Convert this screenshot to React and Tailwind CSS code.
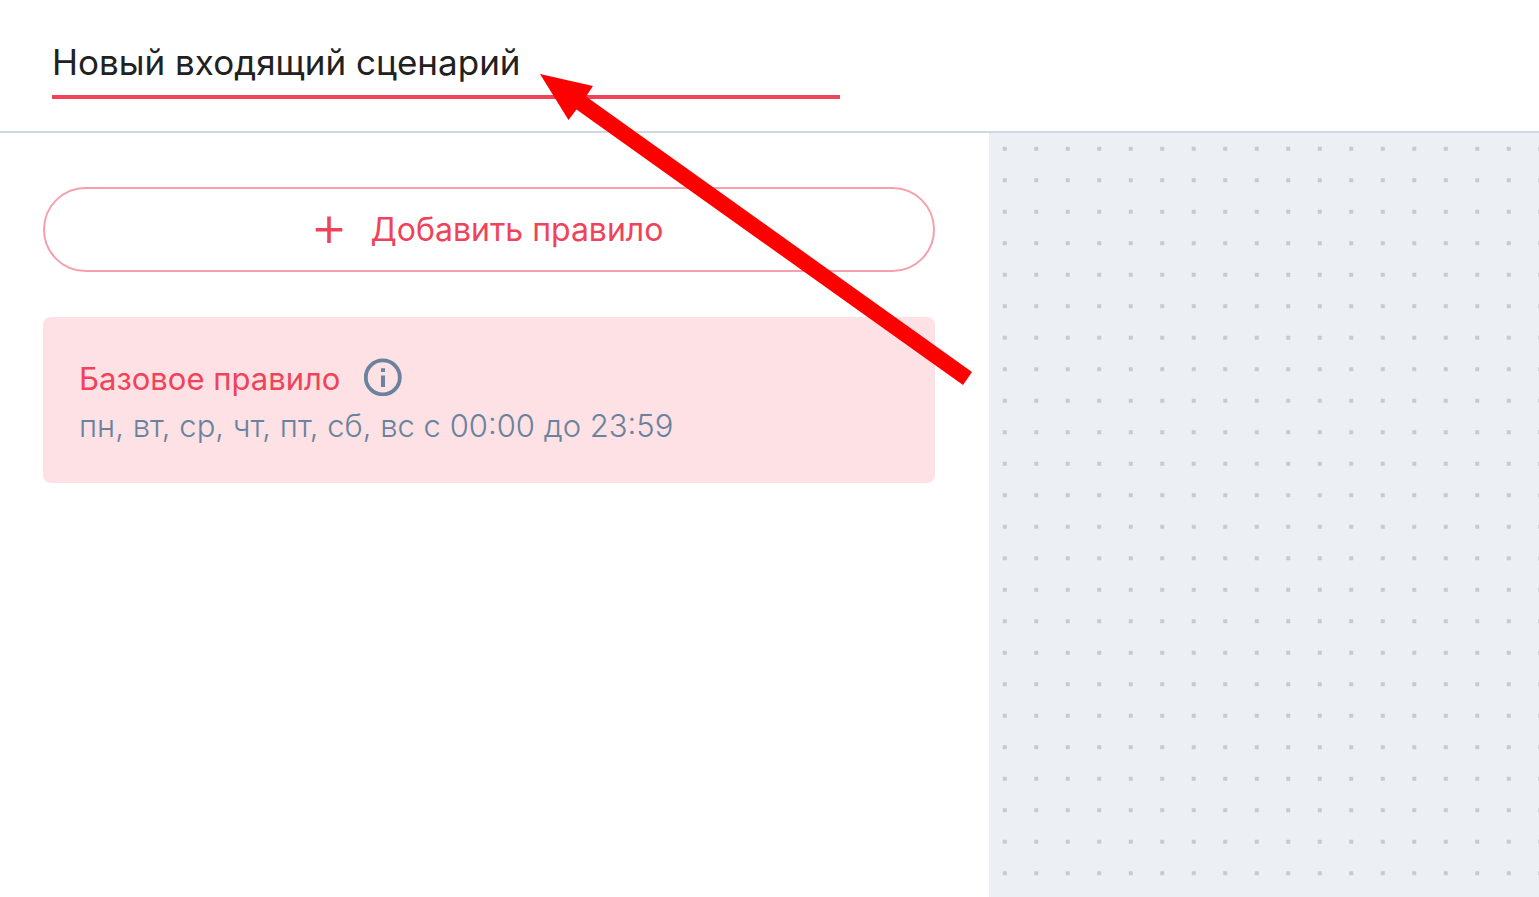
import { useState } from 'react';

const RULES = [
  { id: 'base', title: 'Базовое правило', schedule: 'пн, вт, ср, чт, пт, сб, вс с 00:00 до 23:59' },
];

const DOTS = [15.75, 47.25];

function PlusIcon() {
  return (
    <svg viewBox="0 0 28 28" className="size-7 shrink-0" fill="currentColor" aria-hidden="true">
      <path d="M12.2 .5h3.6v11.5h11.5v3.6H15.8v11.4h-3.6V15.6H.7V12h11.5z" />
    </svg>
  );
}

function InfoIcon() {
  return (
    <svg viewBox="0 0 38 38" className="size-[38px]" aria-hidden="true">
      <circle cx="18.8" cy="19.4" r="17" fill="none" stroke="currentColor" strokeWidth="3.8" />
      <path d="M17 10.2h4v3.8h-4zM17 17.6h4v11.4h-4z" fill="currentColor" />
    </svg>
  );
}

function Pointer() {
  return (
    <svg
      viewBox="0 0 432 312"
      className="pointer-events-none absolute left-[540px] top-[73px] h-[312px] w-[432px]"
      aria-hidden="true"
    >
      <polygon points="0,1 53,13 46,23.5 432,299 423,312 36.5,36.5 28.5,47" fill="#ff0000" />
    </svg>
  );
}

function Canvas() {
  return (
    <section className="bg-[#ecf0f5]">
      <svg className="block h-full w-full" aria-hidden="true">
        <defs>
          <pattern id="dots" width="63" height="63" patternUnits="userSpaceOnUse">
            {DOTS.map((y) =>
              DOTS.map((x) => (
                <rect key={`${x}-${y}`} x={x - 2} y={y - 2} width="4" height="4" fill="#c8cacb" />
              ))
            )}
          </pattern>
        </defs>
        <rect width="100%" height="100%" fill="url(#dots)" />
      </svg>
    </section>
  );
}

export default function App() {
  const [name, setName] = useState('Новый входящий сценарий');

  return (
    <div className="relative flex min-h-screen flex-col bg-white font-['Inter','Liberation_Sans',sans-serif]">
      {/* Header */}
      <header className="border-b-2 border-[#cfd8e1] px-[52px] pt-8 pb-8">
        <input
          type="text"
          aria-label="Название сценария"
          value={name}
          onChange={(e) => setName(e.target.value)}
          className="block h-[67px] w-full max-w-[788px] border-b-4 border-[#f0435a] bg-transparent p-0 pb-1 text-[35px] text-[#212121] outline-none"
        />
      </header>

      <main className="grid flex-1 grid-cols-[989fr_550fr]">
        {/* Rules */}
        <section className="flex flex-col gap-[45px] pt-[54px] pr-[54px] pl-[43px]">
          <button
            type="button"
            className="flex h-[85px] items-center justify-center gap-7 rounded-full border-2 border-[#f79fac] text-[32px] text-[#f0435a]"
          >
            <PlusIcon />
            Добавить правило
          </button>

          {RULES.map((rule) => (
            <article key={rule.id} className="rounded-lg bg-[#fde1e4] px-9 pt-[38px] pb-[34px]">
              <div className="flex items-center gap-6">
                <h2 className="text-[31px] leading-[47px] text-[#f0435a]">{rule.title}</h2>
                <button type="button" aria-label="Информация" className="pb-1 text-[#69839e]">
                  <InfoIcon />
                </button>
              </div>
              <p className="text-[31px] leading-[47px] font-light text-[#69839e]">{rule.schedule}</p>
            </article>
          ))}
        </section>

        <Canvas />
      </main>

      <Pointer />
    </div>
  );
}
